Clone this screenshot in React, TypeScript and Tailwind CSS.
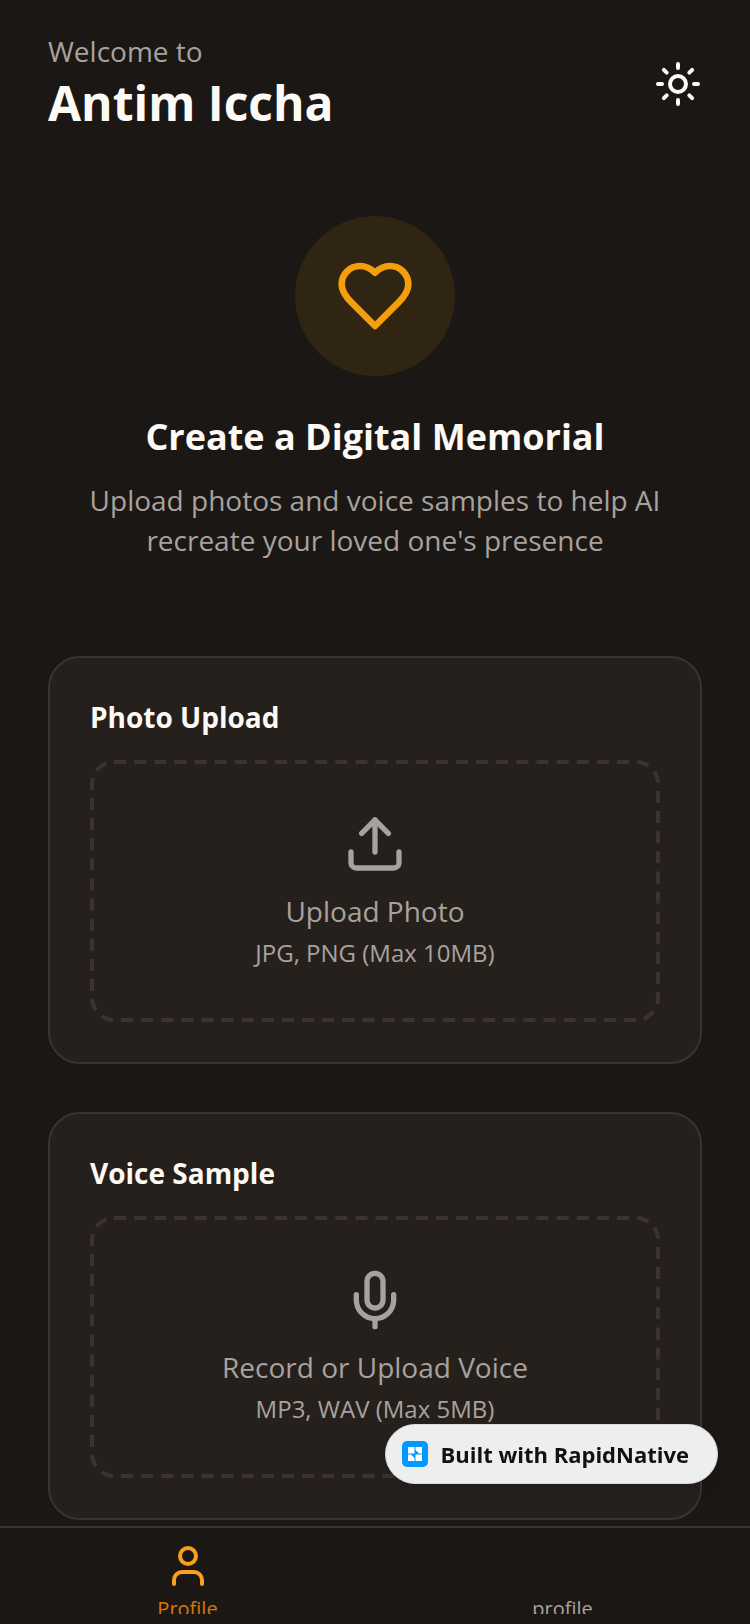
import { useState, type ComponentType } from "react";
import { Mic, Sun, Upload, User, type LucideProps } from "lucide-react";

type UploadCardProps = {
  title: string;
  label: string;
  hint: string;
  icon: ComponentType<LucideProps>;
};

function HeartIcon() {
  return (
    <svg
      viewBox="0 0 24 24"
      fill="none"
      stroke="currentColor"
      strokeWidth="2"
      strokeLinecap="round"
      strokeLinejoin="round"
      className="size-20 text-[#f59e0b]"
      aria-hidden="true"
    >
      <path d="M19 14c1.49-1.46 3-3.21 3-5.5A5.5 5.5 0 0 0 16.5 3c-1.76 0-3 .5-4.5 2-1.5-1.5-2.74-2-4.5-2A5.5 5.5 0 0 0 2 8.5c0 2.3 1.5 4.05 3 5.5l7 7Z" />
    </svg>
  );
}

// CSS dashed borders don't allow control over dash length
function DashedOutline() {
  return (
    <svg
      className="pointer-events-none absolute top-0.5 left-0.5 h-[calc(100%-4px)] w-[calc(100%-4px)] overflow-visible"
      fill="none"
      aria-hidden="true"
    >
      <rect
        width="100%"
        height="100%"
        rx="22"
        stroke="#3a332f"
        strokeWidth="4"
        pathLength={1600}
        strokeDasharray="12 8"
      />
    </svg>
  );
}

function UploadCard({ title, label, hint, icon: Icon }: UploadCardProps) {
  return (
    <section className="rounded-[32px] border-2 border-[#3a332f] bg-[#26201d] p-10">
      <h3 className="text-[28px] leading-[38px] font-bold text-[#fdf9f5]">{title}</h3>
      <button
        type="button"
        className="relative mt-6 flex w-full flex-col items-center rounded-3xl p-[52px] text-[#a8a29e]"
      >
        <DashedOutline />
        <Icon size={64} aria-hidden="true" />
        <span className="mt-4 text-[28px] leading-[38px]">{label}</span>
        <span className="mt-1.5 text-2xl leading-[34px]">{hint}</span>
      </button>
    </section>
  );
}

function BuiltWithBadge() {
  return (
    <a
      href="#rapidnative"
      className="fixed right-8 bottom-[140px] z-20 flex h-[60px] items-center gap-3 rounded-full border border-[#dcd9d6] bg-[#eeeeee] pr-7 pl-4 text-[22px] font-bold text-[#111111] shadow-lg"
    >
      <svg width="26" height="26" viewBox="0 0 26 26" aria-hidden="true">
        <rect width="26" height="26" rx="5" fill="#0099ff" />
        <path
          d="M6 6h6.5v6.5H6zM13.5 6H20v6.5h-3L13.5 9zM6 13.5h3l3.5 3.5v3H6zM13.5 13.5H20V20h-6.5z"
          fill="#fff"
        />
      </svg>
      Built with RapidNative
    </a>
  );
}

const TABS = [
  { id: "home", label: "Profile", icon: User },
  { id: "profile", label: "profile", icon: null },
];

export default function App() {
  const [tab, setTab] = useState("home");

  return (
    <div className="flex h-screen flex-col bg-[#1b1714] font-['Open_Sans','Noto_Sans',sans-serif] text-[#fdf9f5]">
      <main className="min-h-0 flex-1 overflow-hidden">
        <header className="flex items-center justify-between px-12 py-8">
          <div>
            <p className="text-[28px] leading-[38px] text-[#a8a29e]">Welcome to</p>
            <h1 className="text-5xl leading-[66px] font-bold">Antim Iccha</h1>
          </div>
          <button type="button" aria-label="Switch to light theme">
            <Sun size={48} aria-hidden="true" />
          </button>
        </header>

        <section className="flex flex-col items-center px-12 py-12 text-center">
          <div className="grid size-40 place-items-center rounded-full bg-[#302513]">
            <HeartIcon />
          </div>
          <h2 className="mt-8 text-4xl leading-[58px] font-bold">Create a Digital Memorial</h2>
          <p className="mt-3.5 max-w-[600px] text-[28px] leading-10 text-[#a8a29e]">
            Upload photos and voice samples to help AI recreate your loved one's presence
          </p>
        </section>

        <div className="flex flex-col gap-12 px-12 pt-12">
          <UploadCard
            title="Photo Upload"
            label="Upload Photo"
            hint="JPG, PNG (Max 10MB)"
            icon={Upload}
          />
          <UploadCard
            title="Voice Sample"
            label="Record or Upload Voice"
            hint="MP3, WAV (Max 5MB)"
            icon={Mic}
          />
        </div>
      </main>

      <nav className="shrink-0 border-t-2 border-[#3a332f] pt-3.5 pb-2.5">
        <div className="flex h-[72px] overflow-hidden">
          {TABS.map(({ id, label, icon: Icon }) => (
            <button
              key={id}
              type="button"
              onClick={() => setTab(id)}
              aria-current={tab === id ? "page" : undefined}
              className={`flex flex-1 flex-col items-center gap-1 text-xl leading-[30px] ${tab === id ? "text-[#d97706]" : "text-[#a8a29e]"}`}
            >
              <span className="h-12 shrink-0">
                {Icon && <Icon size={48} className="text-[#f5a11b]" aria-hidden="true" />}
              </span>
              <span className="shrink-0">{label}</span>
            </button>
          ))}
        </div>
      </nav>

      <BuiltWithBadge />
    </div>
  );
}
